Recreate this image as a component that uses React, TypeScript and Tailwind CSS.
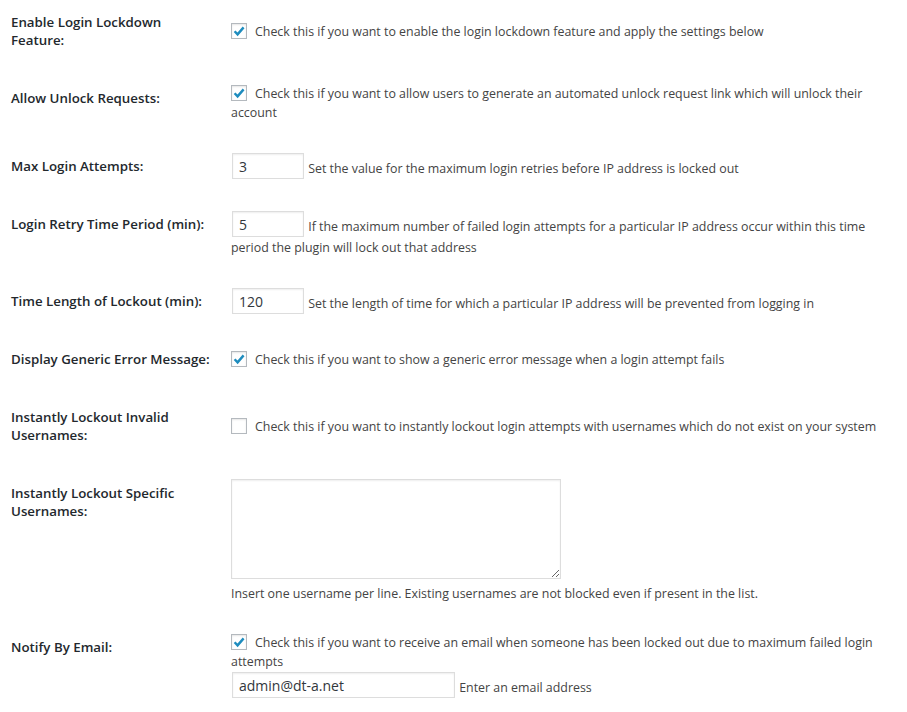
import React from 'react';

const thCls =
  "w-[210px] pt-5 pb-5 pr-2.5 text-left align-top font-semibold text-[13.3px] leading-[18px] text-[#23282d]";
const tdCls = "py-[15px] px-2.5 align-middle text-[12.4px] leading-[19px] text-[#444] whitespace-nowrap";

function Check({ on }: { on: boolean }) {
  return (
    <span className="relative inline-block align-middle -mt-[3px] mr-2 w-4 h-4 border border-[#b4b9be] bg-white shadow-[inset_0_1px_2px_rgba(0,0,0,0.1)]">
      {on && (
        <svg viewBox="0 0 16 16" className="absolute -left-px -top-px w-4 h-4">
          <path
            d="M3.6 8.2 L6.6 11.4 L12.6 4.4"
            fill="none"
            stroke="#1e8cbe"
            strokeWidth="2.4"
            strokeLinecap="butt"
            strokeLinejoin="miter"
          />
        </svg>
      )}
    </span>
  );
}

function TextInput({ value, w }: { value: string; w: string }) {
  return (
    <input
      type="text"
      defaultValue={value}
      className={`${w} h-[26px] m-px px-[6px] align-[1px] bg-white border border-[#ddd] shadow-[inset_0_1px_2px_rgba(0,0,0,0.07)] text-[14px] text-[#32373c] outline-none`}
    />
  );
}

// label lines are split where the settings page wraps them
const rows: { label: string[]; body: React.ReactNode }[] = [
  {
    label: ['Enable Login Lockdown', 'Feature:'],
    body: (
      <>
        <Check on />
        Check this if you want to enable the login lockdown feature and apply the settings below
      </>
    ),
  },
  {
    label: ['Allow Unlock Requests:'],
    body: (
      <>
        <Check on />
        Check this if you want to allow users to generate an automated unlock request link which will unlock their
        <br />
        account
      </>
    ),
  },
  {
    label: ['Max Login Attempts:'],
    body: (
      <>
        <TextInput value="3" w="w-[72px]" />{' '}
        <span>Set the value for the maximum login retries before IP address is locked out</span>
      </>
    ),
  },
  {
    label: ['Login Retry Time Period (min):'],
    body: (
      <>
        <TextInput value="5" w="w-[72px]" />{' '}
        <span>
          If the maximum number of failed login attempts for a particular IP address occur within this time
          <br />
          period the plugin will lock out that address
        </span>
      </>
    ),
  },
  {
    label: ['Time Length of Lockout (min):'],
    body: (
      <>
        <TextInput value="120" w="w-[72px]" />{' '}
        <span>Set the length of time for which a particular IP address will be prevented from logging in</span>
      </>
    ),
  },
  {
    label: ['Display Generic Error Message:'],
    body: (
      <>
        <Check on />
        Check this if you want to show a generic error message when a login attempt fails
      </>
    ),
  },
  {
    label: ['Instantly Lockout Invalid', 'Usernames:'],
    body: (
      <>
        <Check on={false} />
        Check this if you want to instantly lockout login attempts with usernames which do not exist on your system
      </>
    ),
  },
  {
    label: ['Instantly Lockout Specific', 'Usernames:'],
    body: (
      <>
        <textarea className="block w-[330px] h-[100px] border border-[#ddd] bg-white shadow-[inset_0_1px_2px_rgba(0,0,0,0.07)] outline-none resize" />
        <p className="mt-[5px]">
          Insert one username per line. Existing usernames are not blocked even if present in the list.
        </p>
      </>
    ),
  },
  {
    label: ['Notify By Email:'],
    body: (
      <>
        <Check on />
        Check this if you want to receive an email when someone has been locked out due to maximum failed login
        <br />
        attempts
        <br />
        <TextInput value="admin@dt-a.net" w="w-[223px]" />{' '}
        <span>Enter an email address</span>
      </>
    ),
  },
];

export default function App() {
  return (
    <div className="min-h-screen bg-white font-['Open_Sans',sans-serif] pl-[11px] pr-[10px]">
      <table className="w-full border-collapse -mt-[7px]">
        <tbody>
          {rows.map((r, i) => (
            <tr key={i}>
              <th scope="row" className={thCls}>
                <label className="whitespace-nowrap">
                  {r.label.map((l, j) => (
                    <React.Fragment key={j}>
                      {j > 0 && <br />}
                      {l}
                    </React.Fragment>
                  ))}
                </label>
              </th>
              <td className={tdCls}>{r.body}</td>
            </tr>
          ))}
        </tbody>
      </table>
    </div>
  );
}
